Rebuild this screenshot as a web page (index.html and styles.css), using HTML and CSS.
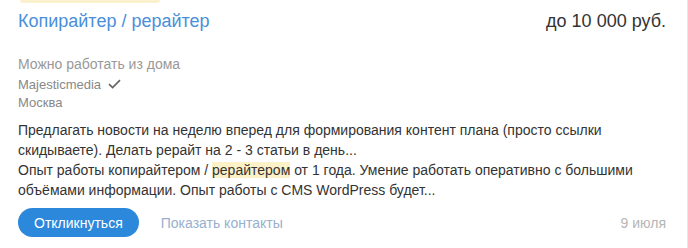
FILE: index.html
```html
<!DOCTYPE html>
<html lang="ru">
<head>
<meta charset="utf-8">
<link rel="stylesheet" href="styles.css">
</head>
<body>
<div class="card">
  <div class="top-badge"></div>
  <div class="header">
    <a class="title" href="#">Копирайтер / рерайтер</a>
    <div class="salary">до 10 000 руб.</div>
  </div>
  <div class="meta">
    <div class="remote">Можно работать из дома</div>
    <div class="company">Majesticmedia
      <svg class="check" width="13" height="10" viewBox="0 0 13 10"><path d="M1 5.2 L4.6 8.6 L12 1.2" fill="none" stroke="#666" stroke-width="1.7"/></svg>
    </div>
    <div class="city">Москва</div>
  </div>
  <p class="desc">Предлагать новости на неделю вперед для формирования контент плана (просто ссылки скидываете). Делать рерайт на 2 - 3 статьи в день...<br>Опыт работы копирайтером / <span class="hl">рерайтером</span> от 1 года. Умение работать оперативно с большими<br>объёмами информации. Опыт работы с CMS WordPress будет...</p>
  <div class="footer">
    <button class="btn">Откликнуться</button>
    <a class="contacts" href="#">Показать контакты</a>
    <span class="date">9 июля</span>
  </div>
</div>
</body>
</html>
```
FILE: styles.css
```css
html, body {
  margin: 0;
  padding: 0;
  background: #ffffff;
}
body {
  font-family: "Liberation Sans", Arial, sans-serif;
  color: #333;
}
.card {
  width: 648px;
  height: 248px;
  padding: 0 21px 0 18px;
  border-right: 1px solid #e8e8e8;
  box-sizing: content-box;
  overflow: hidden;
}
.top-badge {
  width: 140px;
  height: 3px;
  margin-left: 2px;
  background: #fcf1cf;
  border-radius: 0 0 4px 4px;
}
.header {
  display: flex;
  justify-content: space-between;
  align-items: baseline;
  margin-top: 6px;
  line-height: 24px;
}
.title {
  font-size: 18px;
  color: #4a8fda;
  text-decoration: none;
}
.salary {
  font-size: 18px;
  color: #333;
}
.meta {
  margin-top: 21px;
}
.remote {
  font-size: 14px;
  line-height: 20px;
  color: #999;
}
.company {
  margin-top: 2px;
  font-size: 13px;
  line-height: 18px;
  color: #888;
  display: flex;
  align-items: center;
  gap: 7px;
}
.check {
  display: block;
  margin-top: -2px;
}
.city {
  font-size: 13px;
  line-height: 18px;
  color: #888;
}
.desc {
  margin: 8px 0 0;
  font-size: 14px;
  line-height: 20px;
  color: #333;
}
.hl {
  background: #fdf1c7;
}
.footer {
  display: flex;
  align-items: center;
  margin-top: 8px;
}
.btn {
  height: 29px;
  padding: 0 16px;
  border: none;
  border-radius: 15px;
  background: #2b88db;
  color: #fff;
  font-family: "Liberation Sans", Arial, sans-serif;
  font-size: 14px;
}
.contacts {
  margin-left: 22px;
  font-size: 14px;
  color: #98b0cd;
  text-decoration: none;
}
.date {
  margin-left: auto;
  font-size: 14px;
  color: #b5b5b5;
}
```
